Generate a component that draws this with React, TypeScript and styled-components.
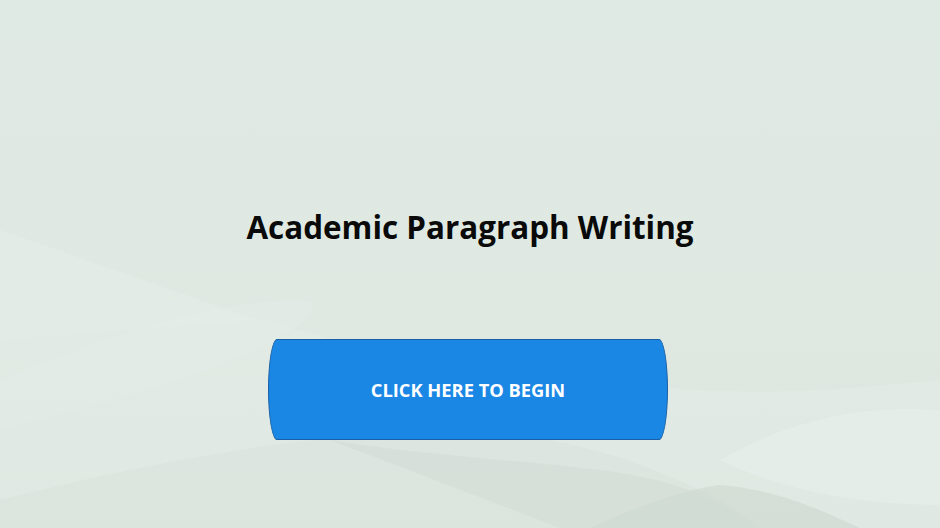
import * as React from 'react'
import styled, { createGlobalStyle } from 'styled-components'

const GlobalStyle = createGlobalStyle`
  html, body {
    margin: 0;
    padding: 0;
    background: #dfe9e3;
  }
  * {
    box-sizing: border-box;
  }
`

const Stage = styled.div`
  position: relative;
  width: 940px;
  height: 528px;
  overflow: hidden;
  background: linear-gradient(180deg, #e0eae4 0%, #dfe9e2 60%, #dbe5de 100%);
  font-family: 'Open Sans', 'Noto Sans', sans-serif;
`

const Waves = styled.svg`
  position: absolute;
  inset: 0;
  width: 100%;
  height: 100%;
  pointer-events: none;
`

const Content = styled.div`
  position: relative;
  display: flex;
  flex-direction: column;
  align-items: center;
  padding-top: 204px;
  height: 100%;
`

const Title = styled.h1`
  margin: 0;
  font-size: 31.4px;
  line-height: 46px;
  font-weight: 700;
  color: #0a0a0a;
`

const BeginButton = styled.button`
  margin-top: 89px;
  margin-left: -4px;
  width: 400px;
  height: 101px;
  background: #1a87e5;
  border: 1px solid #1a5fa5;
  border-radius: 9px / 50%;
  color: #ffffff;
  font-family: 'Open Sans', 'Noto Sans', sans-serif;
  font-size: 18.3px;
  font-weight: 700;
  cursor: pointer;
  display: flex;
  align-items: center;
  justify-content: center;
  padding: 0;
`

const App: React.FC = () => (
  <>
    <GlobalStyle />
    <Stage>
      <Waves viewBox="0 0 940 528" preserveAspectRatio="none">
        <path
          d="M0 300 C 100 280, 200 300, 300 330 C 420 365, 560 380, 700 390 C 800 395, 880 385, 940 380 L 940 528 L 0 528 Z"
          fill="#e3ebe6"
          opacity="0.5"
        />
        <path
          d="M0 380 C 120 330, 220 300, 300 300 C 340 300, 300 360, 0 430 Z"
          fill="#e4ece7"
          opacity="0.5"
        />
        <path
          d="M0 528 L 0 500 C 120 470, 260 440, 420 430 C 560 430, 640 460, 720 500 L 760 528 Z"
          fill="#d9e3dc"
          opacity="0.6"
        />
        <path
          d="M330 440 C 420 455, 520 460, 600 470 C 680 480, 720 500, 760 528 L 560 528 Z"
          fill="#d2ddd5"
          opacity="0.55"
        />
        <path
          d="M590 528 C 630 510, 680 490, 720 485 C 780 490, 820 510, 860 528 Z"
          fill="#cfdad2"
          opacity="0.7"
        />
        <path
          d="M720 460 C 790 420, 860 405, 940 410 L 940 505 C 860 505, 780 490, 720 460 Z"
          fill="#e6ede9"
          opacity="0.75"
        />
        <path
          d="M0 230 C 60 250, 140 280, 260 320 L 0 340 Z"
          fill="#e5ede8"
          opacity="0.4"
        />
      </Waves>
      <Content>
        <Title>Academic Paragraph Writing</Title>
        <BeginButton>CLICK HERE TO BEGIN</BeginButton>
      </Content>
    </Stage>
  </>
)

export default App
